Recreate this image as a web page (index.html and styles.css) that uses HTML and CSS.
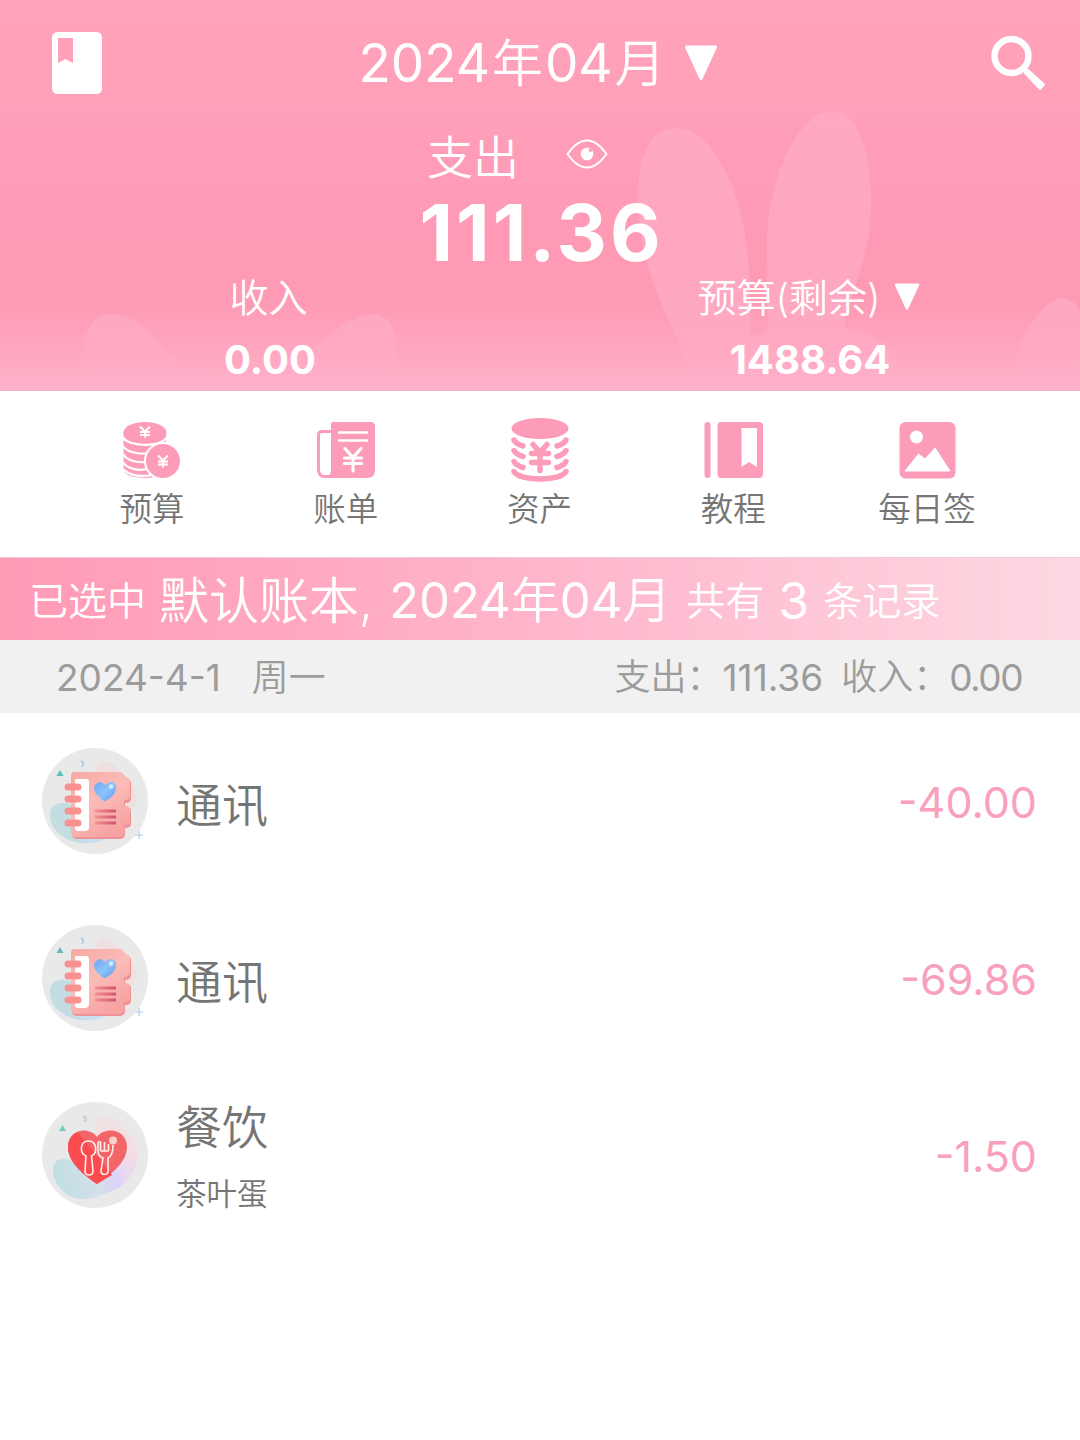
FILE: index.html
```html
<!DOCTYPE html>
<html lang="zh-CN">
<head>
    <meta charset="UTF-8">
    <meta name="viewport" content="width=device-width, initial-scale=1.0">
    <title>记账</title>
    <link rel="stylesheet" href="styles.css">
</head>
<body>
    <!-- shared category icons -->
    <svg class="defs" width="0" height="0">
        <defs>
            <linearGradient id="blob" x1="0" y1="0.4" x2="1" y2="0.3">
                <stop offset="0" stop-color="#bfdfe3"/>
                <stop offset="0.55" stop-color="#d5dfea"/>
                <stop offset="0.8" stop-color="#ddd3fa"/>
                <stop offset="1" stop-color="#f3dce2"/>
            </linearGradient>
            <linearGradient id="haze" x1="0" y1="0" x2="0" y2="1">
                <stop offset="0" stop-color="#efe2e3"/>
                <stop offset="0.5" stop-color="#f5dde3"/>
                <stop offset="1" stop-color="#dcd3fb"/>
            </linearGradient>
            <linearGradient id="cover" x1="0" y1="0" x2="0.6" y2="1">
                <stop offset="0" stop-color="#f8a8a4"/>
                <stop offset="0.5" stop-color="#fbbcb7"/>
                <stop offset="1" stop-color="#f7a3a2"/>
            </linearGradient>
            <linearGradient id="lines" x1="0" y1="0" x2="1" y2="0">
                <stop offset="0" stop-color="#f58f93"/>
                <stop offset="1" stop-color="#cf5270"/>
            </linearGradient>
            <linearGradient id="blue" x1="0" y1="0" x2="1" y2="1">
                <stop offset="0" stop-color="#6fa8ef"/>
                <stop offset="0.5" stop-color="#8cc3fb"/>
                <stop offset="1" stop-color="#5e97ea"/>
            </linearGradient>
            <linearGradient id="fur" gradientUnits="userSpaceOnUse" x1="0" y1="110" x2="0" y2="391">
                <stop offset="0" stop-color="#ffb2c9" stop-opacity="0.5"/>
                <stop offset="0.7" stop-color="#ffb2cb" stop-opacity="0.55"/>
                <stop offset="1" stop-color="#ffb2cb" stop-opacity="0.1"/>
            </linearGradient>
            <symbol id="icon-phone" viewBox="0 0 106 106">
                <circle cx="53" cy="53" r="53" fill="#e9e9e9"/>
                <path d="M53 20C58 10 72 12 76 24C90 28 98 46 92 60L76 70L50 40z" fill="#eee0e0"/>
                <path d="M8 66C8 54 22 52 32 58L70 84C62 96 36 100 20 88C12 82 8 76 8 66z" fill="#c4dde2"/>
                <path d="M36 92C50 99 64 92 72 84L50 80z" fill="#c7dff0"/>
                <path d="M18 22l3.5 6h-7z" fill="#5dbdbd"/>
                <path d="M39 13q4 2 1 6" fill="none" stroke="#b5cbe6" stroke-width="2"/>
                <path d="M97 83v8M93 87h8" stroke="#c6d6ef" stroke-width="1.6"/>
                <path d="M30 26H78q5 0 5 5q6 0 6 4v15q0 5-6 5v4q6 0 6 4v13q0 4-6 4v6q0 5-6 5H36q-6 0-6-5z" fill="#ef9297"/>
                <path d="M32 24h45q5 0 5 5q6 0 6 4v14q0 5-6 5v6q6 0 6 4v11q0 4-6 4v7q0 5-5 5H34q-5 0-5-5V28q0-4 3-4z" fill="url(#cover)"/>
                <path d="M33 31h11q3 0 3 3v45q0 4-4 4h-7q-3 0-3-3z" fill="#fff"/>
                <path d="M26 39h10M26 51h10M26 63h10M26 75h10" stroke="#f8918f" stroke-width="7" stroke-linecap="round"/>
                <path d="M63 53.500C54 48 50 42 53 37Q58 31 63 37Q70 31 74 37Q76 46 63 53.500z" fill="url(#blue)"/>
                <circle cx="69" cy="38.500" r="2.200" fill="#d5ecff"/>
                <path d="M53 61.500h21v3H53zM53 67.500h21v3H53zM53 73.500h21v3H53z" fill="url(#lines)"/>
            </symbol>
            <symbol id="icon-food" viewBox="0 0 106 106">
                <circle cx="53" cy="53" r="53" fill="#e9e9e9"/>
                <path d="M54 20C60 9 76 13 79 25C94 33 101 54 91 70C84 81 72 86 62 87L52 40z" fill="url(#haze)"/>
                <path d="M11 68C11 55 24 54 34 60L90 72C80 88 66 90 56 94C42 100 27 97 20 88C14 82 11 76 11 68z" fill="url(#blob)"/>
                <path d="M20.500 23l3.500 6h-7z" fill="#76cbc4"/>
                <path d="M41 14q4 2 1 6M44 14v5" fill="none" stroke="#c1cfdd" stroke-width="1.500"/>
                <path d="M55 82C43 74 26 61 26 45C26 27 47 24 55 35C63 24 85 27 85 45C85 61 67 74 55 82z" fill="#f2666a"/>
                <path d="M55 82C43 74 26 61 26 45C26 37 31 32 36 30L70 73z" fill="#fa4c50"/>
                <g fill="none" stroke="#fff0ea" stroke-width="1.600" stroke-linejoin="round">
                    <path d="M44 54C37 51 38 39 46.500 39C55 39 56 51 49.500 54L51 69Q51 73 47 73Q43 73 43 69z"/>
                    <path d="M56 40v9q0 5 5 7l-2 13q0 3 3 3.500q4 0 4-3L66 56Q71 54 71 43M56 40h2.500v9M62.500 40v9M66.500 42v7M58.500 49h8"/>
                </g>
                <circle cx="71" cy="38.500" r="4" fill="#fbd0c9"/>
            </symbol>
        </defs>
    </svg>

    <header class="header">
        <svg class="rabbits" viewBox="0 0 1080 391">
            <g fill="url(#fur)">
                <path d="M675 128C648 129 638 162 638 193C639 256 658 300 676 336C684 352 686 370 690 391H910C904 358 880 330 844 328C850 290 872 258 871 200C871 150 856 111 833 111C797 112 768 180 767 243L768 330Q760 336 750 336C752 290 749 250 742 219C732 174 708 127 675 128z"/>
                <path d="M82 391C80 345 84 315 112 314C143 316 160 346 182 366C220 374 270 376 311 350C335 328 358 314 376 314C397 318 400 350 397 391z"/>
                <path d="M1010 391C1014 340 1042 300 1063 298Q1074 298 1080 312V391z"/>
            </g>
        </svg>

        <div class="title-bar">
            <svg class="book" viewBox="0 0 52 64">
                <path fill="#fff" fill-rule="evenodd" d="M7 1H45Q51 1 51 7V57Q51 63 45 63H7Q1 63 1 57V7Q1 1 7 1zM7 7V32L14.500 28L22 32V7z"/>
            </svg>
            <div class="month">
                <span class="month-text">2024<b>年</b>04<b>月</b></span>
                <svg class="arrow" viewBox="0 0 34 36"><path d="M2.500 2H31.500L17 33.500z" fill="#fff" stroke="#fff" stroke-width="3" stroke-linejoin="round"/></svg>
            </div>
            <svg class="search" viewBox="0 0 56 56">
                <circle cx="21.500" cy="21" r="17" fill="none" stroke="#fff" stroke-width="6.500"/>
                <path d="M34 34.500L38 35L54 49.500L50 54L35 38z" fill="#fff" stroke="#fff" stroke-width="2" stroke-linejoin="round"/>
            </svg>
        </div>

        <div class="expense">
            <div class="expense-label">
                <span>支出</span>
                <svg class="eye" viewBox="0 0 42 30">
                    <path d="M1.500 15C6 9 12 1.500 21 1.500S36 9 40.500 15C36 21 30 28.500 21 28.500S6 21 1.500 15z" fill="none" stroke="#fff" stroke-width="2"/>
                    <circle cx="21" cy="15" r="6.300" fill="#fff"/>
                    <circle cx="24.500" cy="11" r="2" fill="#ff9eb9"/>
                </svg>
            </div>
            <div class="expense-value">111.36</div>
        </div>

        <div class="totals">
            <div class="total">
                <div class="total-label">收入</div>
                <div class="total-value">0.00</div>
            </div>
            <div class="total">
                <div class="total-label">预算(剩余)
                    <svg class="arrow-small" viewBox="0 0 34 36"><path d="M2.500 2H31.500L17 33.500z" fill="#fff" stroke="#fff" stroke-width="3" stroke-linejoin="round"/></svg>
                </div>
                <div class="total-value">1488.64</div>
            </div>
        </div>
    </header>

    <nav class="menu">
        <a class="menu-item">
            <svg class="menu-icon" viewBox="0 0 64 64">
                <path d="M3.500 14V53C8 62 40 62 46 54V14z" fill="#fd9cb9"/>
                <path d="M3 19C7 29 42 30 47 19M3 28C8 36 26 38 38 32M3 36C7 43 18 45 28 44M3 44C7 51 18 53 28 51M3 51C9 58 22 59 32 57" fill="none" stroke="#fff" stroke-width="2.200"/>
                <ellipse cx="25" cy="14.500" rx="21.500" ry="10.500" fill="#fd9cb9"/>
                <circle cx="43" cy="43" r="18" fill="#fd9cb9" stroke="#fff" stroke-width="2"/>
                <path d="M20 8.500l5 5l5-5M25 13.500v6M20 14h10M20 17h10M38 37.500l5 5l5-5M43 42.500v7M38 43.500h10M38 46.500h10" fill="none" stroke="#fff" stroke-width="2"/>
            </svg>
            <span>预算</span>
        </a>
        <a class="menu-item">
            <svg class="menu-icon" viewBox="0 0 64 64">
                <path d="M18 13.500H8Q4.500 13.500 4.500 17V51Q4.500 58.500 11 58.500H20" fill="none" stroke="#fd9cb9" stroke-width="3"/>
                <path d="M19 4H57Q61 4 61 8V52Q61 60 53 60H11Q17 59 17 51V7Q17 4 19 4z" fill="#fd9cb9"/>
                <path d="M25 14.500H53M25 22.500H53" stroke="#fff" stroke-width="2.600" stroke-linecap="round"/>
                <path d="M31 30.500l8 9l8-9M39 40v13M30.500 40h17M30.500 45.500h17" fill="none" stroke="#fff" stroke-width="3.200" stroke-linecap="round"/>
            </svg>
            <span>账单</span>
        </a>
        <a class="menu-item">
            <svg class="menu-icon" viewBox="0 0 64 64">
                <ellipse cx="33" cy="10.500" rx="28.500" ry="10.500" fill="#fd9cb9"/>
                <path d="M7 22Q9 26 16 28M7 32.500Q9 36.500 16 38.500M7 43.500Q9 47.500 16 49.500M59 22Q57 26 50 28M59 32.500Q57 36.500 50 38.500M59 43.500Q57 47.500 50 49.500M7 53.500C12 63.500 54 63.500 59 53.500M26 26.500l7 8l7-8M33 36v16.500M24.500 35.500h17M24.500 44.500h17" fill="none" stroke="#fd9cb9" stroke-width="5.500" stroke-linecap="round"/>
            </svg>
            <span>资产</span>
        </a>
        <a class="menu-item">
            <svg class="menu-icon" viewBox="0 0 64 64">
                <path d="M6.500 7V57" stroke="#fd9cb9" stroke-width="6" stroke-linecap="round"/>
                <path fill="#fd9cb9" fill-rule="evenodd" d="M20 4H58Q62 4 62 8V56Q62 60 58 60H20Q16.500 60 16.500 56V8Q16.500 4 20 4zM40.500 10V49L48 44L56 49V10z"/>
            </svg>
            <span>教程</span>
        </a>
        <a class="menu-item">
            <svg class="menu-icon" viewBox="0 0 64 64">
                <rect x="4.500" y="4" width="56" height="56.500" rx="6" fill="#fd9cb9"/>
                <circle cx="21.500" cy="19" r="6.500" fill="#fff"/>
                <path d="M10 53L23.500 36L30 41L40 30L55 53z" fill="#fff" stroke="#fff" stroke-linejoin="round"/>
            </svg>
            <span>每日签</span>
        </a>
    </nav>

    <div class="banner">
        <span class="small">已选中</span>
        <span class="book-name">默认账本,</span>
        <span class="book-month">2024<b>年</b>04<b>月</b></span>
        <span class="small">共有</span>
        <span class="count">3</span>
        <span class="small">条记录</span>
    </div>

    <div class="day">
        <span class="day-date">2024-4-1</span>
        <span class="day-week">周一</span>
        <span class="day-label">支出：</span>
        <span class="day-sum">111.36</span>
        <span class="day-label income">收入：</span>
        <span class="day-sum zero">0.00</span>
    </div>

    <ul class="records">
        <li class="record">
            <svg class="record-icon"><use href="#icon-phone"/></svg>
            <div class="record-text"><div class="record-name">通讯</div></div>
            <span class="amount">-40.00</span>
        </li>
        <li class="record">
            <svg class="record-icon"><use href="#icon-phone"/></svg>
            <div class="record-text"><div class="record-name">通讯</div></div>
            <span class="amount">-69.86</span>
        </li>
        <li class="record">
            <svg class="record-icon"><use href="#icon-food"/></svg>
            <div class="record-text">
                <div class="record-name">餐饮</div>
                <div class="record-note">茶叶蛋</div>
            </div>
            <span class="amount">-1.50</span>
        </li>
    </ul>
</body>
</html>
```

FILE: styles.css
```css
* {
    box-sizing: border-box;
}
body {
    margin: 0;
    background-color: #fff;
    font-family: Inter, "Noto Sans CJK SC", sans-serif;
    font-weight: 350;
    color: #757575;
    white-space: nowrap;
}
b {
    font-weight: 350;
}
svg {
    display: block;
    flex: none;
}
.defs {
    position: absolute;
}

/* header */
.header {
    position: relative;
    height: 391px;
    color: #fff;
    background: linear-gradient(#ffa4ba 0, #ff9db8 150px, #fe9ab5 230px, #fe9ab3 300px, #ffa3bd 340px, #ffb2cb 391px);
}
.rabbits {
    position: absolute;
    top: 0;
    left: 0;
    width: 1080px;
    height: 391px;
}
.title-bar,
.expense,
.totals {
    position: relative;
}
.title-bar {
    display: flex;
    justify-content: space-between;
    align-items: center;
    height: 126px;
    padding: 0 34px 0 51px;
}
.book {
    width: 52px;
    height: 64px;
}
.month {
    display: flex;
    align-items: center;
    gap: 16px;
    margin-right: 17px;
}
.month-text {
    font-size: 53px;
    font-weight: 400;
    line-height: 80px;
}
.month-text b {
    margin: 0 2px;
    font-size: 51px;
}
.arrow {
    width: 34px;
    height: 36px;
}
.search {
    width: 56px;
    height: 56px;
}
.expense-label {
    display: flex;
    align-items: center;
    height: 62px;
    padding-left: 427px;
    font-size: 46px;
    line-height: 62px;
}
.eye {
    width: 42px;
    height: 30px;
    margin: -6px 0 0 47px;
}
.expense-value {
    height: 86px;
    padding-left: 3px;
    font-size: 78px;
    font-weight: 700;
    line-height: 89px;
    letter-spacing: 3px;
    text-align: center;
}
.totals {
    display: flex;
}
.total {
    width: 50%;
}
.total-label {
    display: flex;
    justify-content: center;
    align-items: center;
    gap: 13px;
    height: 42px;
    padding-right: 3px;
    font-size: 39px;
}
.arrow-small {
    width: 26px;
    height: 28px;
    margin-top: 4px;
}
.total-value {
    height: 75px;
    font-size: 40px;
    font-weight: 700;
    line-height: 87px;
    text-align: center;
}

/* shortcuts */
.menu {
    display: flex;
    height: 166px;
    padding: 27px 56px 0 55px;
}
.menu-item {
    flex: 1;
    display: flex;
    flex-direction: column;
    align-items: center;
    font-size: 32.5px;
    line-height: 55px;
}
.menu-icon {
    width: 64px;
    height: 64px;
}

/* selected book */
.banner {
    display: flex;
    align-items: center;
    height: 83px;
    padding: 4px 0 0 29px;
    border-top: 1px solid #eccdd6;
    color: #fff;
    font-size: 50px;
    line-height: 80px;
    background: linear-gradient(90deg, #ff9ab5, #ffb5cb 50%, #fdd8e2);
}
.banner .small {
    font-size: 39px;
}
.book-name {
    margin: 0 16px 0 13px;
}
.book-month {
    margin-right: 15px;
    font-size: 49px;
    font-weight: 400;
}
.count {
    margin: 0 14px;
    font-weight: 400;
}

/* day header */
.day {
    display: flex;
    align-items: center;
    height: 73px;
    padding: 2px 58px 0 56px;
    background-color: #f1f1f1;
    color: #9c9c9c;
    font-size: 37px;
    line-height: 71px;
}
.day-date,
.day-sum {
    font-weight: 400;
}
.day-week {
    margin: 0 auto 0 31px;
}
.day-label {
    font-size: 36px;
}
.income {
    margin-left: 18px;
}
.zero {
    letter-spacing: -1.5px;
}

/* records */
.records {
    margin: -1px 0 0;
    padding: 0;
    list-style: none;
}
.record {
    display: flex;
    align-items: center;
    height: 177px;
    padding: 0 43px 0 42px;
}
.record-icon {
    width: 106px;
    height: 106px;
}
.record-text {
    flex: 1;
    padding-top: 9px;
    margin-left: 28px;
}
.record-name {
    font-size: 46px;
    line-height: 69px;
}
.record-note {
    font-size: 30.5px;
    line-height: 64px;
}
.amount {
    padding-top: 2px;
    color: #f9a0bc;
    font-size: 43px;
    font-weight: 400;
}
```
